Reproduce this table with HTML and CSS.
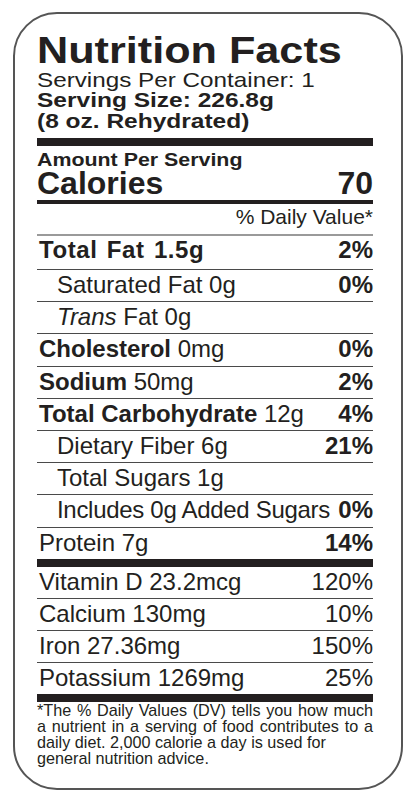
FILE: index.html
```html
<!DOCTYPE html>
<html lang="en">

<head>
    <meta charset="UTF-8">
    <meta name="viewport" content="width=device-width, initial-scale=1.0">
    <title>Nutrition Facts</title>
    <link rel="stylesheet" href="styles.css">
</head>

<body>

    <div class="label">
        <header class="label-head">
            <h1 class="title"><span class="stretch stretch-title">Nutrition Facts</span></h1>
            <p class="servings"><span class="stretch stretch-servings">Servings Per Container: 1</span></p>
            <p class="size"><span class="stretch stretch-size">Serving Size: 226.8g</span></p>
            <p class="size"><span class="stretch stretch-size">(8 oz. Rehydrated)</span></p>
        </header>

        <div class="bar bar-thick bar-head"></div>

        <p class="amount"><span class="stretch stretch-amount">Amount Per Serving</span></p>
        <div class="calories">
            <span>Calories</span>
            <span>70</span>
        </div>

        <div class="bar bar-medium"></div>

        <p class="dv-head">% Daily Value*</p>

        <ul class="nutrients">
            <li class="row row-first"><span class="name wide"><b>Total Fat 1.5g</b></span><b>2%</b></li>
            <li class="row"><span class="name indent">Saturated Fat 0g</span><b>0%</b></li>
            <li class="row"><span class="name indent"><i>Trans</i> Fat 0g</span></li>
            <li class="row"><span class="name"><b>Cholesterol</b> 0mg</span><b>0%</b></li>
            <li class="row"><span class="name"><b>Sodium</b> 50mg</span><b>2%</b></li>
            <li class="row"><span class="name"><b>Total Carbohydrate</b> 12g</span><b>4%</b></li>
            <li class="row"><span class="name indent">Dietary Fiber 6g</span><b>21%</b></li>
            <li class="row"><span class="name indent">Total Sugars 1g</span></li>
            <li class="row"><span class="name indent tight">Includes 0g Added Sugars</span><b>0%</b></li>
            <li class="row"><span class="name">Protein 7g</span><b>14%</b></li>
        </ul>

        <div class="bar bar-thick"></div>

        <ul class="vitamins">
            <li class="row"><span class="name">Vitamin D 23.2mcg</span><span>120%</span></li>
            <li class="row"><span class="name">Calcium 130mg</span><span>10%</span></li>
            <li class="row"><span class="name">Iron 27.36mg</span><span>150%</span></li>
            <li class="row"><span class="name">Potassium 1269mg</span><span>25%</span></li>
        </ul>

        <div class="bar bar-thick"></div>

        <p class="footnote">*The % Daily Values (DV) tells you how much a nutrient in a serving of food contributes to a daily diet. 2,000 calorie a day is used for<br>general nutrition advice.</p>
    </div>

</body>

</html>
```

FILE: styles.css
```css
* {
    box-sizing: border-box;
}

:root {
    --ink: #231f20;
    --rule: #4a4a4a;
    --rule-light: #9a9a9a;
}

body {
    margin: 0;
    background: #ffffff;
    color: var(--ink);
    font-family: "Liberation Sans", Arial, Helvetica, sans-serif;
}

p,
h1,
ul {
    margin: 0;
    padding: 0;
}

ul {
    list-style: none;
}

.label {
    width: 390px;
    margin: 12px 0 0 13px;
    padding: 18.5px 28px 22px 22px;
    border: 2px solid #555;
    border-radius: 44px;
}

/* header text is printed wider than the regular face */
.stretch {
    display: inline-block;
    white-space: nowrap;
    transform-origin: left center;
}

.stretch-title {
    transform: scaleX(1.2);
}

.stretch-servings {
    transform: scaleX(1.155);
}

.stretch-size {
    transform: scaleX(1.225);
}

.stretch-amount {
    transform: scaleX(1.125);
}

.title {
    font-size: 36px;
    line-height: 36px;
    font-weight: 700;
}

.servings {
    font-size: 21px;
    line-height: 21px;
}

.size {
    font-size: 20px;
    line-height: 21px;
    font-weight: 700;
}

.bar {
    background: var(--ink);
}

.bar-thick {
    height: 8px;
}

.bar-head {
    margin-top: 6.5px;
}

.bar-medium {
    height: 4px;
    margin-top: 3px;
}

.amount {
    margin-top: 3.5px;
    font-size: 19px;
    line-height: 19.5px;
    font-weight: 700;
}

.calories {
    display: flex;
    justify-content: space-between;
    font-size: 32px;
    line-height: 28px;
    font-weight: 700;
}

.dv-head {
    text-align: right;
    font-size: 21px;
    line-height: 26px;
    padding-bottom: 4px;
}

.row {
    display: flex;
    justify-content: space-between;
    font-size: 24px;
    line-height: 29.2px;
    padding-bottom: 2px;
    border-top: 1px solid var(--rule);
    white-space: nowrap;
}

.row-first {
    border-top: 2px solid var(--rule-light);
    line-height: 27px;
    padding-bottom: 6px;
}

.row b {
    font-weight: 700;
}

.name {
    padding-left: 2px;
}

.indent {
    padding-left: 20px;
}

.wide {
    letter-spacing: 0.6px;
    word-spacing: 2px;
}

.tight {
    letter-spacing: -0.3px;
}

.vitamins .row {
    line-height: 29px;
}

.vitamins .row:first-child {
    border-top: none;
}

.footnote {
    font-size: 16.2px;
    line-height: 16px;
    text-align: justify;
}
```
